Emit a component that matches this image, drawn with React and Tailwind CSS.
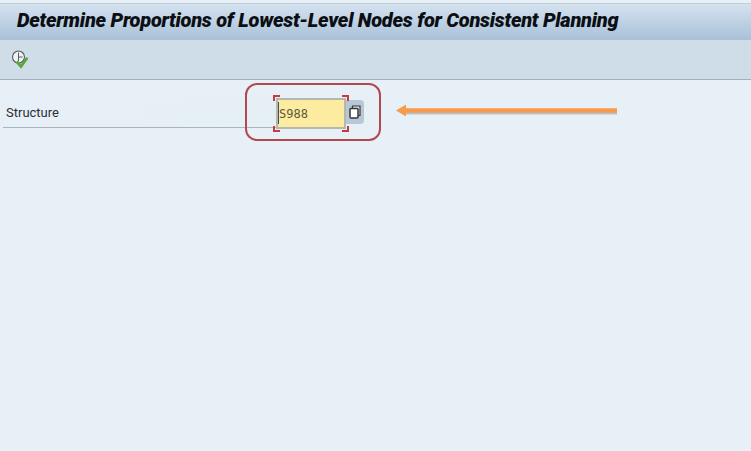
function ClockCheckIcon() {
  return (
    <svg width="18" height="20" viewBox="0 0 18 20" fill="none">
      <circle cx="7.5" cy="7" r="6" fill="#eef2f5" stroke="#555b60" strokeWidth="1.1" />
      <path d="M7.5 2.5V11M7.5 7H11.5" stroke="#555b60" strokeWidth="1" />
      <path d="M5.7 11.5L10 16.5L16.3 7.7" stroke="#5aa53c" strokeWidth="2.8" />
    </svg>
  )
}

function CopyPagesIcon() {
  return (
    <svg width="12" height="14" viewBox="0 0 12 14" fill="none">
      <path d="M3.5 3V1H11V10.5H9" fill="#dfe4ea" stroke="#33373b" strokeWidth="1.2" />
      <rect x="1" y="3.5" width="8" height="9.5" rx="1" fill="#fff" stroke="#33373b" strokeWidth="1.5" />
    </svg>
  )
}

export default function App() {
  return (
    <div className="relative w-[751px] h-[451px] overflow-hidden bg-[#e8f0f7] font-['Open_Sans','Liberation_Sans',sans-serif]">
      {/* Title bar */}
      <div className="mt-[3px] h-[37px] flex items-center pl-[17px] pb-[5px] bg-gradient-to-b from-[#d5e2ef] to-[#a9c1d8] border-t border-[#c2ccd4]">
        <h1 className="font-['Roboto',sans-serif] text-[20px] font-black italic text-[#0b0f14] tracking-[-0.27px] whitespace-nowrap">
          Determine Proportions of Lowest-Level Nodes for Consistent Planning
        </h1>
      </div>

      {/* Toolbar */}
      <div className="h-[40px] flex items-center pl-[11px] bg-[#cfdde8] border-b border-[#a3afb9]">
        <ClockCheckIcon />
      </div>

      {/* Selection form */}
      <div className="flex items-start pt-[18px] pl-[3px]">
        <div className="w-[273px] h-[30px] flex items-center pl-[3px] pt-[1px] border-b border-[#aab6bf] bg-gradient-to-r from-[#e8f0f7] to-[#e6eff3]">
          <span className="font-['Roboto',sans-serif] text-[13px] text-[#2a2f33]">Structure</span>
        </div>
        <div className="relative w-[70px] h-[31px] flex items-center pl-[1px] bg-[#fdeb9f] border-2 border-[#b4b8ae]">
          <span className="font-['DejaVu_Sans_Mono','Liberation_Mono',monospace] text-[12px] text-[#5c5a3a]">S988</span>
          <span className="absolute left-0 top-[2px] w-px h-[22px] bg-[#3c4f6b]" />
          <span className="absolute -left-[5px] -top-[5px] w-[7px] h-[6px] border-l-2 border-t-2 border-[#c63a44]" />
          <span className="absolute -right-[5px] -top-[5px] w-[7px] h-[6px] border-r-2 border-t-2 border-[#c63a44]" />
          <span className="absolute -left-[5px] -bottom-[5px] w-[7px] h-[6px] border-l-2 border-b-2 border-[#c63a44]" />
          <span className="absolute -right-[5px] -bottom-[5px] w-[7px] h-[6px] border-r-2 border-b-2 border-[#c63a44]" />
        </div>
        <div className="w-[18px] h-[24px] mt-[2px] flex items-center justify-center rounded-r-sm bg-[#b9c6d6]">
          <CopyPagesIcon />
        </div>
      </div>

      {/* Annotation overlay */}
      <div className="absolute left-[245px] top-[83px] w-[136px] h-[58px] rounded-[12px] border-2 border-[#b5474f]" />
      <svg className="absolute left-[390px] top-[100px]" width="235" height="22" viewBox="0 0 235 22" fill="none">
        <path d="M227 12.5H16" stroke="#9aa3ab" strokeWidth="4" opacity="0.6" />
        <path d="M227 10.5H15" stroke="#f79a4b" strokeWidth="4.5" />
        <path d="M6 10.5L16 4.5V16.5Z" fill="#f79a4b" />
      </svg>
    </div>
  )
}
